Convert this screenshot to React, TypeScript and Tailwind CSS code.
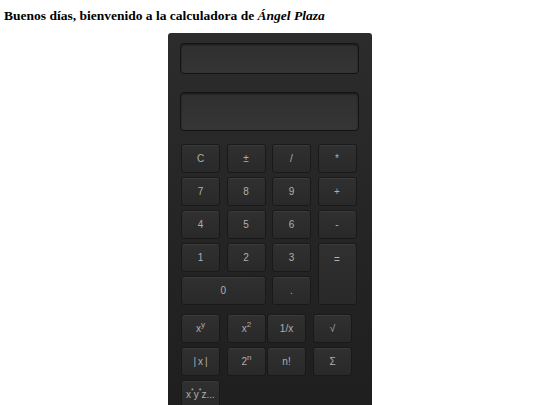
import { ReactNode } from 'react';

function Key({ children, className = '' }: { children: ReactNode; className?: string }) {
  return (
    <button
      className={`flex items-center justify-center rounded-[3px] border border-[#191919] bg-gradient-to-b from-[#303030] to-[#292929] text-[10px] text-[#b0b0b0] shadow-[inset_0_1px_0_rgba(255,255,255,0.06)] ${className}`}
    >
      {children}
    </button>
  );
}

export default function App() {
  const keys = ['C', '±', '/', '*', '7', '8', '9', '+', '4', '5', '6', '-', '1', '2', '3'];

  return (
    <div className="min-h-[405px] bg-white font-['Liberation_Serif',serif]">
      <h1 className="px-[4px] pt-[7px] text-[13.5px] font-bold leading-[17px] text-black">
        Buenos días, bienvenido a la calculadora de <i>Ángel Plaza</i>
      </h1>

      <div className="mx-auto mt-[9px] h-[388px] w-[204px] rounded-t-[3px] bg-gradient-to-b from-[#2c2c2c] to-[#1e1e1e] pl-[12px] pt-[10px] font-['Liberation_Sans',Arial,sans-serif]">
        {/* Displays */}
        <div className="h-[31px] w-[179px] rounded-[4px] border border-[#141414] bg-gradient-to-b from-[#2f2f2f] to-[#353535] shadow-[inset_0_1px_2px_rgba(0,0,0,0.5)]" />
        <div className="mt-[18px] h-[39px] w-[179px] rounded-[4px] border border-[#141414] bg-gradient-to-b from-[#2f2f2f] to-[#363636] shadow-[inset_0_1px_2px_rgba(0,0,0,0.5)]" />

        {/* Main keys */}
        <div className="mt-[13px] ml-[1px] grid grid-cols-[39px_39px_39px_39px] auto-rows-[29px] gap-x-[6.5px] gap-y-[4px]">
          {keys.map(k => (
            <Key key={k}>{k}</Key>
          ))}
          <Key className="row-span-2">
            <span className="-mt-[30px]">=</span>
          </Key>
          <Key className="col-span-2">0</Key>
          <Key>.</Key>
        </div>

        {/* Scientific keys */}
        <div className="mt-[9px] ml-[1px] flex flex-col gap-[4px]">
          <div className="flex">
            <Key className="h-[29px] w-[39px]">
              x<sup className="text-[8px]">y</sup>
            </Key>
            <Key className="ml-[7px] h-[29px] w-[39px]">
              x<sup className="text-[8px]">2</sup>
            </Key>
            <Key className="ml-[1px] h-[29px] w-[39px]">1/x</Key>
            <Key className="ml-[7px] h-[29px] w-[39px]">√</Key>
          </div>
          <div className="flex">
            <Key className="h-[29px] w-[39px]">|&thinsp;x&thinsp;|</Key>
            <Key className="ml-[7px] h-[29px] w-[39px]">
              2<sup className="text-[8px]">n</sup>
            </Key>
            <Key className="ml-[1px] h-[29px] w-[39px]">n!</Key>
            <Key className="ml-[7px] h-[29px] w-[39px]">Σ</Key>
          </div>
          <div className="flex">
            <Key className="h-[29px] w-[39px]">
              x<sup className="text-[7px]">*</sup>y<sup className="text-[7px]">*</sup>z...
            </Key>
          </div>
        </div>
      </div>
    </div>
  );
}
